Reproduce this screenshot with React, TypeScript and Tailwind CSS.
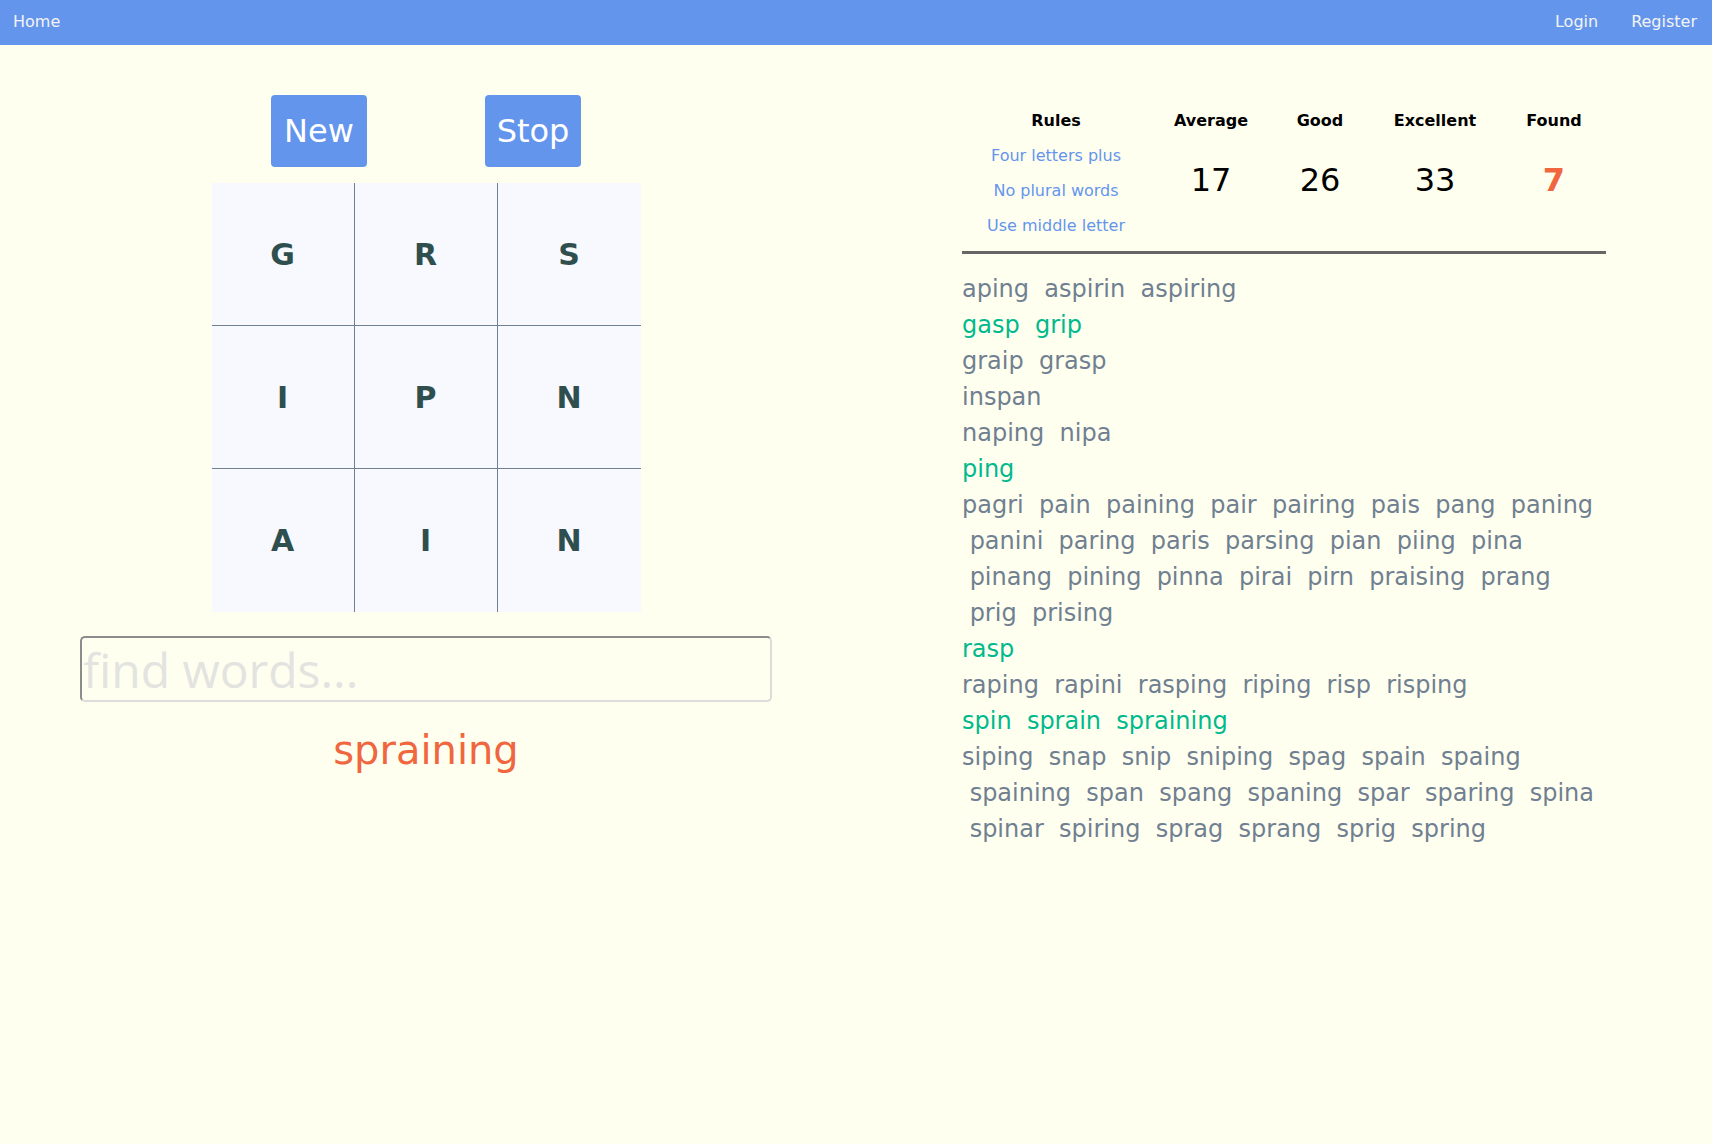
import React from "react";

const groups: { found: boolean; words: string[] }[] = [
  { found: false, words: ["aping", "aspirin", "aspiring"] },
  { found: true, words: ["gasp", "grip"] },
  { found: false, words: ["graip", "grasp"] },
  { found: false, words: ["inspan"] },
  { found: false, words: ["naping", "nipa"] },
  { found: true, words: ["ping"] },
  {
    found: false,
    words: [
      "pagri", "pain", "paining", "pair", "pairing", "pais", "pang", "paning", "panini", "paring", "paris",
      "parsing", "pian", "piing", "pina", "pinang", "pining", "pinna", "pirai", "pirn", "praising", "prang",
      "prig", "prising",
    ],
  },
  { found: true, words: ["rasp"] },
  { found: false, words: ["raping", "rapini", "rasping", "riping", "risp", "risping"] },
  { found: true, words: ["spin", "sprain", "spraining"] },
  {
    found: false,
    words: [
      "siping", "snap", "snip", "sniping", "spag", "spain", "spaing", "spaining", "span", "spang", "spaning",
      "spar", "sparing", "spina", "spinar", "spiring", "sprag", "sprang", "sprig", "spring",
    ],
  },
];

const letters = ["G", "R", "S", "I", "P", "N", "A", "I", "N"];

export default function App() {
  return (
    <div className="min-h-[1144px] w-full bg-[#fffff0] font-['DejaVu_Sans',sans-serif]">
      <header className="flex h-[45px] items-center justify-between bg-[#6495ed] px-[13px] pb-px text-[16px] text-[#f3f3f3]">
        <span>Home</span>
        <div className="flex gap-[33px] pr-[2px]">
          <span>Login</span>
          <span>Register</span>
        </div>
      </header>
      <div className="flex">
        <div className="flex w-[852px] flex-col items-center pt-[50px]">
          <div className="flex gap-[118px]">
            <button className="h-[72px] w-[96px] rounded-[4px] bg-[#6495ed] text-[32px] text-white">New</button>
            <button className="h-[72px] w-[96px] rounded-[4px] bg-[#6495ed] text-[32px] text-white">Stop</button>
          </div>
          <div className="mt-[16px] grid h-[429px] w-[429px] grid-cols-[142px_142px_143px] grid-rows-[142px_142px_143px] gap-px bg-[#708090]">
            {letters.map((l, i) => (
              <div
                key={i}
                className="flex items-center justify-center bg-[#f8f8ff] text-[30px] font-bold text-[#2f4f4f]"
              >
                {l}
              </div>
            ))}
          </div>
          <input
            placeholder="find words..."
            className="mt-[24px] h-[66px] w-[692px] rounded-[5px] border-2 border-t-[#8c8c8c] border-l-[#8c8c8c] border-r-[#dcdcdc] border-b-[#dcdcdc] bg-transparent px-[1px] font-['Open_Sans',sans-serif] text-[48px] leading-none placeholder:text-[#e3e3e0] outline-none"
          />
          <div className="mt-[25px] text-[40px] leading-[47px] text-[#f0673f]">spraining</div>
        </div>
        <div className="flex-1 pt-[58px]">
          <div className="ml-[110px] w-[644px]">
            <div className="grid grid-cols-[188px_122px_96px_134px_104px] grid-rows-[35px_35px_35px_35px] border-b-[3px] border-[#666666] pb-[8px] text-center">
              <div className="flex items-center justify-center text-[16px] font-bold text-black">Rules</div>
              <div className="flex items-center justify-center text-[16px] font-bold text-black">Average</div>
              <div className="flex items-center justify-center text-[16px] font-bold text-black">Good</div>
              <div className="flex items-center justify-center text-[16px] font-bold text-black">Excellent</div>
              <div className="flex items-center justify-center text-[16px] font-bold text-black">Found</div>
              <div className="col-start-1 row-start-2 flex items-center justify-center text-[16px] text-[#6495ed]">Four letters plus</div>
              <div className="col-start-1 row-start-3 flex items-center justify-center text-[16px] text-[#6495ed]">No plural words</div>
              <div className="col-start-1 row-start-4 flex items-center justify-center text-[16px] text-[#6495ed]">Use middle letter</div>
              <div className="col-start-2 row-span-3 row-start-2 pt-[23px] text-[32px] leading-[38px] text-black">17</div>
              <div className="col-start-3 row-span-3 row-start-2 pt-[23px] text-[32px] leading-[38px] text-black">26</div>
              <div className="col-start-4 row-span-3 row-start-2 pt-[23px] text-[32px] leading-[38px] text-black">33</div>
              <div className="col-start-5 row-span-3 row-start-2 pt-[23px] text-[32px] font-bold leading-[38px] text-[#f0673f]">7</div>
            </div>
            <div className="mt-[17px] text-[24px] leading-[36px]">
              {groups.map((g, i) => (
                <div key={i} className={g.found ? "text-[#00b98c]" : "text-[#708090]"}>
                  {g.words.join(" \u00a0")}
                </div>
              ))}
            </div>
          </div>
        </div>
      </div>
    </div>
  );
}
